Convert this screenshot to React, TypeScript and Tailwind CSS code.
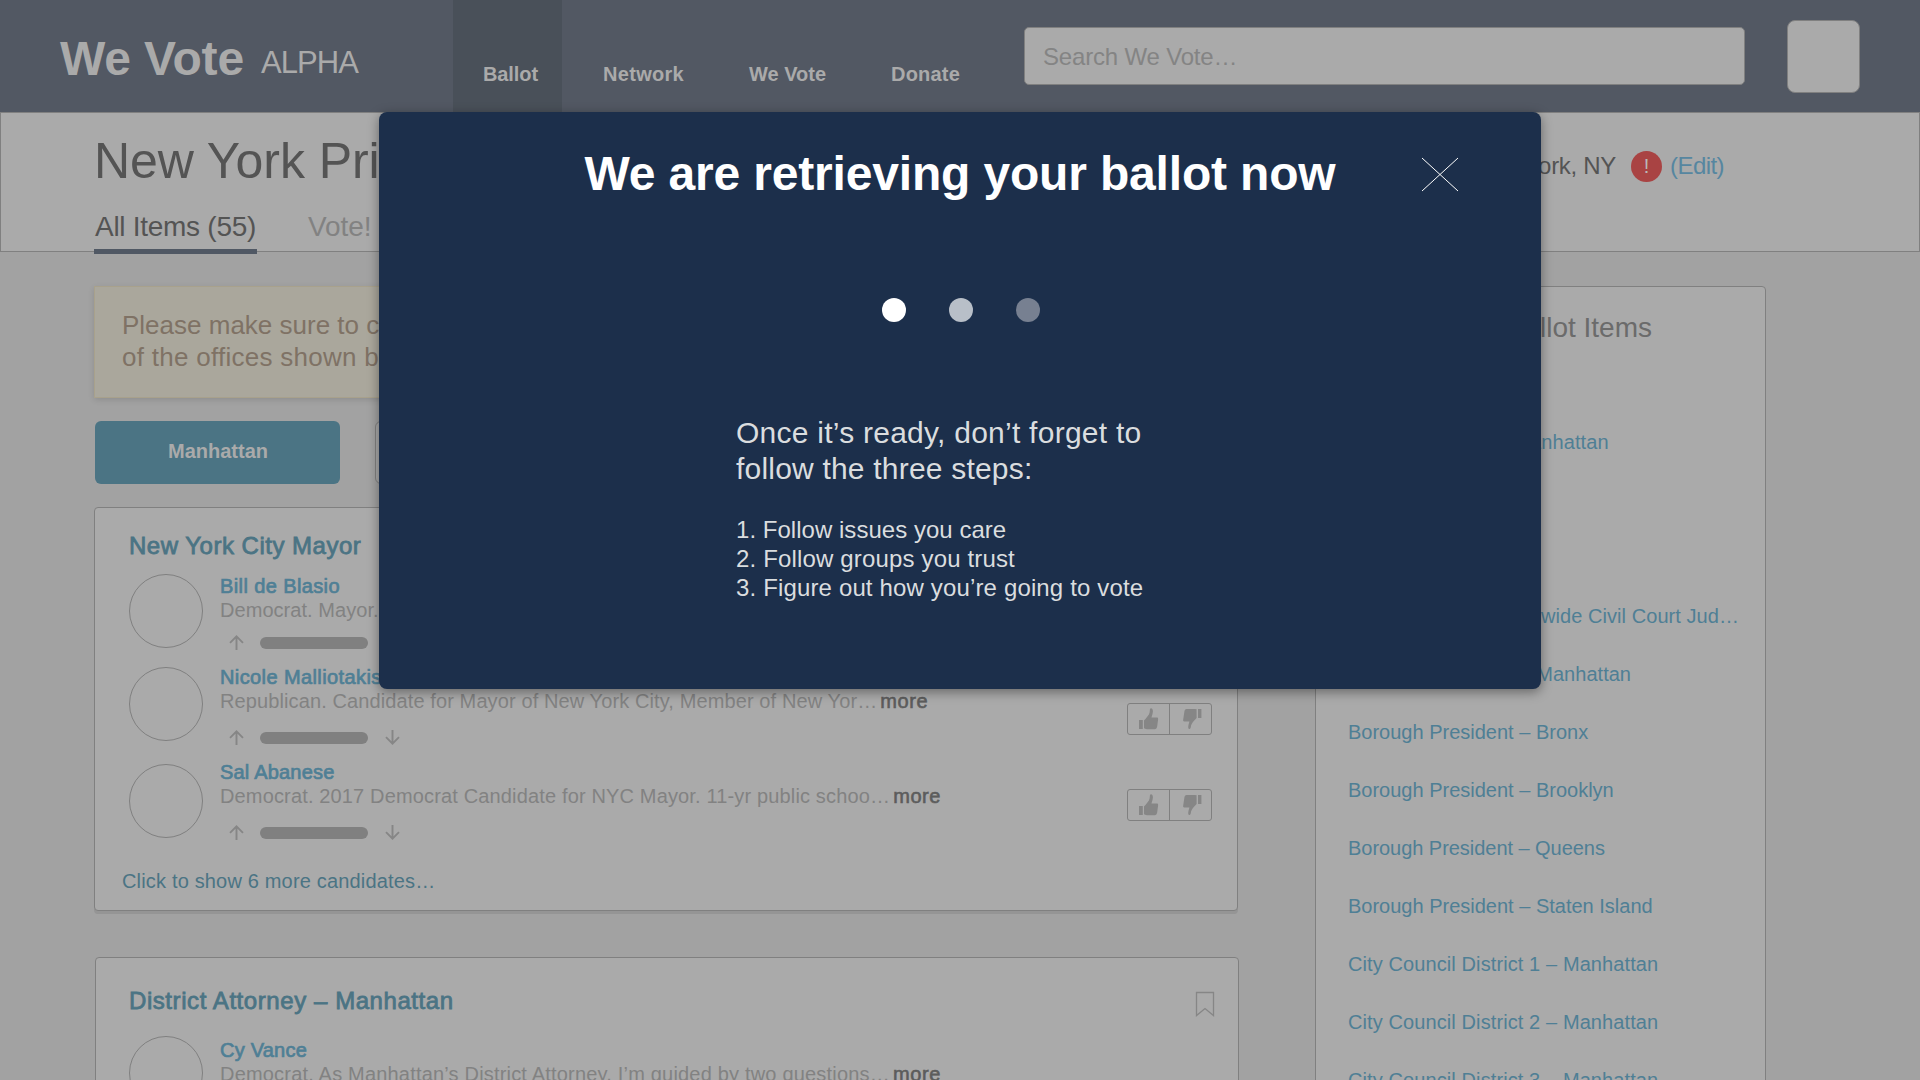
import type { ReactNode } from "react";

function Arrow({ down = false }: { down?: boolean }) {
  return (
    <svg width="15" height="15" viewBox="0 0 15 15" fill="none" stroke="#868686" strokeWidth="1.9" className={down ? "rotate-180" : ""}>
      <path d="M7.5 15V1.4M1 7.9L7.5 1.4L14 7.9" />
    </svg>
  );
}

function Thumbs({ className }: { className: string }) {
  return (
    <div className={`flex h-8 w-[85px] rounded-[3px] border border-[#808080] ${className}`}>
      <div className="w-[42px] border-r border-[#808080] pl-[11px] pt-1">
        <svg width="20" height="22" viewBox="0 0 20 22" fill="#868686">
          <path d="M0 12h3.8v9H0zM5 20V12.6C7.5 9.5 10.2 7 10.6 4.5L11 1c.9-1.5 3-.6 2.9 2.6-.1 2.2-1 4.2-1.4 6H18c1 0 1.3 1 1.1 2l-.9 6.6c-.3 1.9-1.1 3-2.6 3H8C6.500 21.200 5.500 20.700 5 20Z" />
        </svg>
      </div>
      <div className="pl-[13px] pt-[5px]">
        <svg width="19" height="21" viewBox="0 0 19 21" fill="#868686">
          <path d="M15 0h3.400v9H15zM13.600.3V9l-2.800 3C9 14 8 16 7.800 18c-.3 2.500-2.300 2.500-2.500 1-.3-2.500.7-4.500 1.100-6.500H1.200C.3 12.500 0 11.500.2 10.500l1.200-8C1.600 1 2.200 0 3.600 0H12Z" />
        </svg>
      </div>
    </div>
  );
}

function Avatar({ className = "" }: { className?: string }) {
  return <div className={`size-[74px] shrink-0 rounded-full border border-[#808080] ${className}`} />;
}

type CandidateProps = {
  name: ReactNode;
  description: ReactNode;
  more?: boolean;
  rowClass: string;
  avatarClass?: string;
  meterClass: string;
  thumbsClass: string;
};

function Candidate({ name, description, more = true, rowClass, avatarClass, meterClass, thumbsClass }: CandidateProps) {
  return (
    <div className={`flex pl-[34px] ${rowClass}`}>
      <Avatar className={avatarClass} />
      <div className="ml-[17px] flex-1 text-[20px] leading-6">
        <div className="text-[#4f7f95] [-webkit-text-stroke:0.7px_#4f7f95]">{name}</div>
        <div className="flex whitespace-nowrap text-[#828282]">
          {description}
          {more && <span className="ml-[3px] tracking-[0.6px] text-[#5c5c5c] [-webkit-text-stroke:0.6px_#5c5c5c]">more</span>}
        </div>
        <div className={`flex items-center pl-[9px] ${meterClass}`}>
          <Arrow />
          <div className="ml-4 h-3 w-[108px] rounded-full bg-[#808080]" />
          <div className="ml-[17px]">
            <Arrow down />
          </div>
        </div>
      </div>
      <Thumbs className={`mr-[25px] ${thumbsClass}`} />
    </div>
  );
}

function Header() {
  return (
    <header className="flex h-28 items-start bg-[#525863] text-[#aaaaaa]">
      <div className="flex w-[453px] items-start whitespace-nowrap pl-[60px]">
        <div className="mt-[35px] w-[184px] text-[48px] font-bold leading-[48px] tracking-[-0.13px]">We Vote</div>
        <div className="ml-[17px] mt-[47px] text-[31px] leading-8 tracking-[-0.93px]">ALPHA</div>
      </div>
      <nav className="flex h-full whitespace-nowrap text-[20px] font-bold leading-6">
        <div className="h-full w-[109px] bg-[#495059] pl-[30px] pt-[62px] tracking-[-0.1px]">Ballot</div>
        <div className="ml-[41px] w-[82px] pt-[62px] tracking-[0.3px]">Network</div>
        <div className="ml-[64px] w-[77px] pt-[62px]">We Vote</div>
        <div className="ml-[65px] w-[70px] pt-[62px] tracking-[0.2px]">Donate</div>
      </nav>
      <div className="ml-[63px] mt-[27px] h-[58px] w-[721px] rounded-[5px] border border-[#808080] bg-[#aaaaaa] pl-[18px] pt-px text-[24px] leading-[56px] tracking-[-0.18px] text-[#848484]">
        Search We Vote…
      </div>
      <div className="ml-[42px] mt-5 size-[73px] rounded-lg border border-[#808080] bg-[#aaaaaa]" />
    </header>
  );
}

function SubHeader() {
  return (
    <section className="flex h-[140px] items-start justify-between border border-[#808080] bg-[#aaaaaa] text-[#545454]">
      <div className="whitespace-nowrap pl-[93px]">
        <h1 className="mt-[23px] text-[50px] leading-[50px] tracking-[-0.05px]">New York Primary</h1>
        <div className="mt-[25px] flex items-start text-[28px] leading-8">
          <div className="h-[43px] w-[163px] border-b-[5px] border-[#505864] pl-px tracking-[-0.28px]">All Items (55)</div>
          <div className="ml-[51px] tracking-[-0.1px] text-[#828282]">Vote!</div>
        </div>
      </div>
      <div className="mr-[195px] mt-[37px] flex text-[24px] leading-8">
        <span className="tracking-[-0.3px]">New York, NY</span>
        <span className="ml-[15px] mt-[1px] size-[31px] rounded-full bg-[#a94343] text-center text-[20px] leading-[31px] text-[#bababa]">!</span>
        <span className="ml-2 tracking-[-0.56px] text-[#5686a0]">(Edit)</span>
      </div>
    </section>
  );
}

function BallotColumn() {
  return (
    <div className="w-[1145px] shrink-0">
      <div className="h-28 w-[1144px] whitespace-nowrap border border-[#a8a18c] bg-[#aaa79c] pl-[27px] pt-[22px] text-[26px] leading-8 text-[#7f7265] shadow-[0_2px_6px_rgba(0,0,0,0.12)]">
        <div>Please make sure to check</div>
        <div className="tracking-[0.27px]">of the offices shown below</div>
      </div>
      <div className="ml-px mt-[23px] flex gap-[35px]">
        <div className="h-[63px] w-[245px] rounded-md bg-[#4b7484] pl-px text-center text-[20px] font-bold leading-[60px] text-[#aaaaaa]">Manhattan</div>
        <div className="h-[63px] w-[245px] rounded-md border border-[#808080] bg-[#aaaaaa]" />
      </div>
      <section className="mt-[23px] h-[404px] w-[1144px] rounded-[4px] border border-[#808080] bg-[#aaaaaa] pt-[26px] shadow-[0_3px_0_#959595]">
        <h2 className="pl-[34px] text-[24px] leading-6 tracking-[0.5px] text-[#4b7484] [-webkit-text-stroke:0.8px_#4b7484]">New York City Mayor</h2>
        <Candidate
          rowClass="mt-[16px] h-[91px]"
          name={<span className="tracking-[0.39px]">Bill de Blasio</span>}
          description={<span className="tracking-[0.05px]">Democrat. Mayor.</span>}
          more={false}
          meterClass="mt-[13px]"
          thumbsClass="mt-[38px]"
        />
        <Candidate
          rowClass="h-[95px]"
          avatarClass="mt-[2px]"
          name={<span className="tracking-[0.4px]">Nicole Malliotakis</span>}
          description={<span className="tracking-[0.108px]">Republican. Candidate for Mayor of New York City, Member of New Yor…</span>}
          meterClass="mt-[17px]"
          thumbsClass="mt-[38px]"
        />
        <Candidate
          rowClass="h-[109px]"
          avatarClass="mt-[4px]"
          name={<span className="tracking-[0.2px]">Sal Abanese</span>}
          description={<span className="tracking-[0.15px]">Democrat. 2017 Democrat Candidate for NYC Mayor. 11-yr public schoo…</span>}
          meterClass="mt-[17px]"
          thumbsClass="mt-[29px]"
        />
        <div className="pl-[27px] text-[20px] leading-6 tracking-[0.17px] text-[#4b7484]">Click to show 6 more candidates…</div>
      </section>
      <section className="ml-px mt-[46px] h-[300px] w-[1144px] rounded-[4px] border border-[#808080] bg-[#aaaaaa]">
        <div className="flex h-[78px] items-start justify-between pl-[33px] pr-[23px]">
          <h2 className="mt-[31px] text-[24px] leading-6 tracking-[0.57px] text-[#4b7484] [-webkit-text-stroke:0.8px_#4b7484]">District Attorney – Manhattan</h2>
          <svg width="20" height="26" viewBox="0 0 20 26" fill="none" stroke="#868686" strokeWidth="1.3" className="mt-[33px]">
            <path d="M1.500 1.500H18.500V24.500L10 17.500L1.500 24.500Z" />
          </svg>
        </div>
        <div className="-ml-px">
          <Candidate
            rowClass="h-[120px]"
            avatarClass=""
            name={<div className="pt-[2px] tracking-[0.22px]">Cy Vance</div>}
            description={<span className="tracking-[0.19px]">Democrat. As Manhattan’s District Attorney, I’m guided by two questions…</span>}
            meterClass="mt-[18px]"
            thumbsClass="mt-[60px]"
          />
        </div>
      </section>
    </div>
  );
}

const ballotItems: { label: string; className: string }[] = [
  { label: "New York City Mayor", className: "" },
  { label: "District Attorney – Manhattan", className: "tracking-[0.14px]" },
  { label: "Public Advocate", className: "" },
  { label: "City Comptroller", className: "" },
  { label: "Manhattan – Countywide Civil Court Jud…", className: "w-[391px] text-right tracking-[0.06px]" },
  { label: "Borough President – Manhattan", className: "tracking-[0.02px]" },
  { label: "Borough President – Bronx", className: "" },
  { label: "Borough President – Brooklyn", className: "" },
  { label: "Borough President – Queens", className: "tracking-[-0.04px]" },
  { label: "Borough President – Staten Island", className: "" },
  { label: "City Council District 1 – Manhattan", className: "tracking-[0.1px]" },
  { label: "City Council District 2 – Manhattan", className: "tracking-[0.1px]" },
  { label: "City Council District 3 – Manhattan", className: "tracking-[0.1px]" },
];

function Summary() {
  return (
    <aside className="ml-[76px] h-[900px] w-[451px] shrink-0 whitespace-nowrap rounded-[4px] border border-[#808080] bg-[#aaaaaa] pl-[32px]">
      <h2 className="-ml-px mt-[25px] text-[28px] leading-8 text-[#6b6b6b]">Summary of Ballot Items</h2>
      <div className="mt-[11px] text-[20px] leading-[58px] text-[#4f7f95]">
        {ballotItems.map((item) => (
          <div key={item.label} className={item.className}>
            {item.label}
          </div>
        ))}
      </div>
    </aside>
  );
}

function LoadingModal() {
  return (
    <div className="absolute left-[379px] top-28 h-[577px] w-[1162px] rounded-lg bg-[#1c2f4b] shadow-[0_3px_12px_rgba(0,0,0,0.4)]">
      <h2 className="mt-[34px] text-center text-[48px] font-bold leading-[56px] tracking-[-0.17px] text-white">We are retrieving your ballot now</h2>
      <svg width="38" height="35" viewBox="0 0 38 35" stroke="#ffffff" strokeWidth="1" className="absolute left-[1042px] top-[45px]">
        <path d="M1 1L37 34M37 1L1 34" />
      </svg>
      <div className="mt-[95.5px] flex justify-center gap-[43px] pl-px">
        <div className="size-6 rounded-full bg-white" />
        <div className="size-6 rounded-full bg-[#b8bfc8]" />
        <div className="size-6 rounded-full bg-[#778091]" />
      </div>
      <div className="ml-[357px] mt-[93.5px] whitespace-nowrap text-[#dadddf]">
        <div className="text-[30px] leading-9">
          <div className="tracking-[0.25px]">Once it’s ready, don’t forget to</div>
          <div className="tracking-[0.2px]">follow the three steps:</div>
        </div>
        <div className="mt-7 text-[24px] leading-[29px]">
          <div className="tracking-[0.03px]">1. Follow issues you care</div>
          <div className="tracking-[0.16px]">2. Follow groups you trust</div>
          <div className="tracking-[0.15px]">3. Figure out how you’re going to vote</div>
        </div>
      </div>
    </div>
  );
}

export default function App() {
  return (
    <div className="relative h-[1080px] w-[1920px] overflow-hidden bg-[#a2a2a2] font-['Liberation_Sans',Arial,sans-serif]">
      <Header />
      <SubHeader />
      <main className="flex items-start pl-[94px] pt-[34px]">
        <BallotColumn />
        <Summary />
      </main>
      <LoadingModal />
    </div>
  );
}
